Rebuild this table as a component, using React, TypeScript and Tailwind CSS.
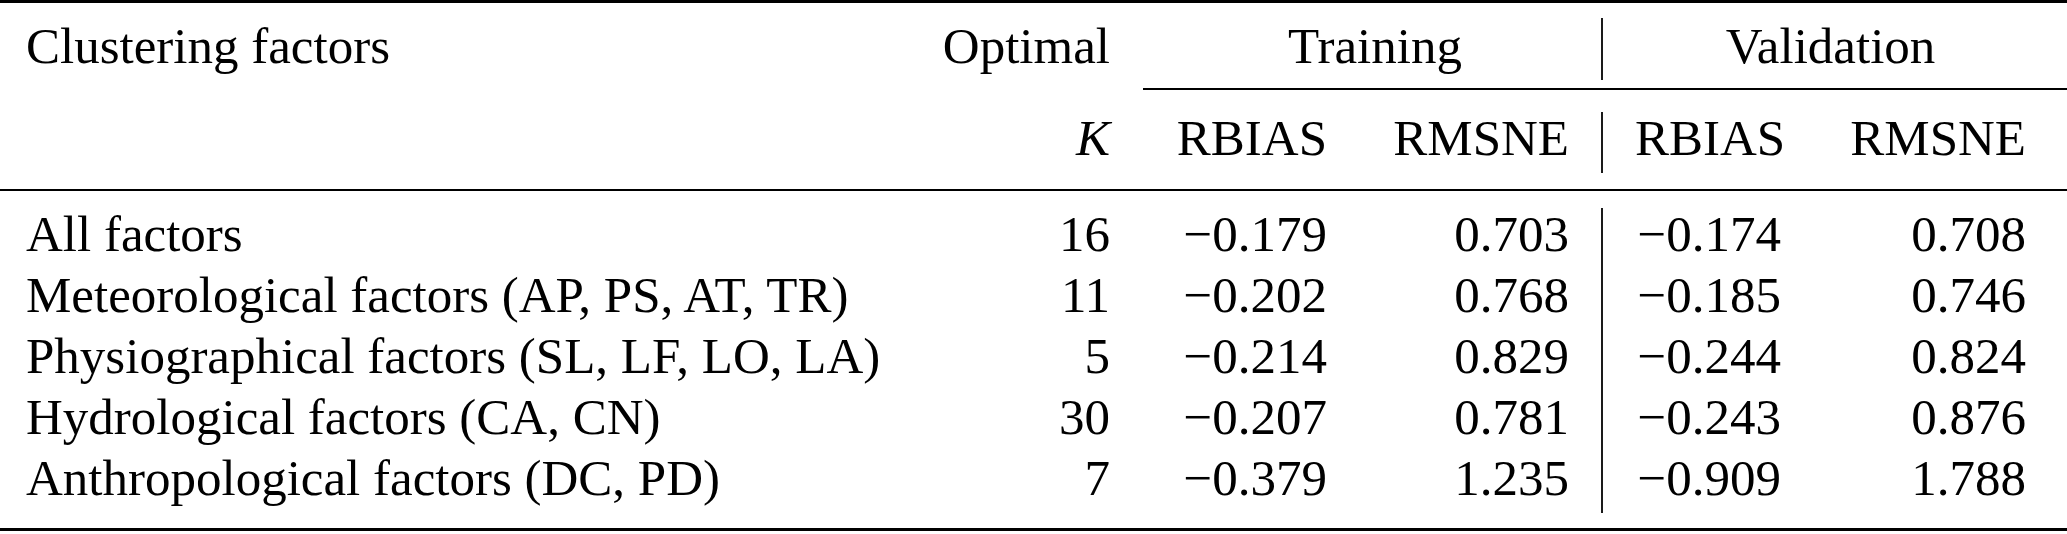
import React from 'react';

type Row = {
  name: string;
  k: string;
  tBias: string;
  tRmsne: string;
  vBias: string;
  vRmsne: string;
};

const rows: Row[] = [
  { name: 'All factors', k: '16', tBias: '−0.179', tRmsne: '0.703', vBias: '−0.174', vRmsne: '0.708' },
  { name: 'Meteorological factors (AP, PS, AT, TR)', k: '11', tBias: '−0.202', tRmsne: '0.768', vBias: '−0.185', vRmsne: '0.746' },
  { name: 'Physiographical factors (SL, LF, LO, LA)', k: '5', tBias: '−0.214', tRmsne: '0.829', vBias: '−0.244', vRmsne: '0.824' },
  { name: 'Hydrological factors (CA, CN)', k: '30', tBias: '−0.207', tRmsne: '0.781', vBias: '−0.243', vRmsne: '0.876' },
  { name: 'Anthropological factors (DC, PD)', k: '7', tBias: '−0.379', tRmsne: '1.235', vBias: '−0.909', vRmsne: '1.788' },
];

// column widths (px): name 900 | K 210 | train RBIAS 217 | train RMSNE 242 | bar 66 | val RBIAS 146 | val RMSNE 245
const Divider = ({ top, bottom }: { top: string; bottom: string }) => (
  <div className="w-[66px] flex justify-center">
    <div className={`w-[2px] bg-[#1a1a1a] ${top} ${bottom}`} />
  </div>
);

const BodyColumn = ({
  width,
  align,
  values,
  extra = '',
}: {
  width: string;
  align: string;
  values: string[];
  extra?: string;
}) => (
  <div className={`${width} ${align} ${extra} pt-[13px] flex flex-col`}>
    {values.map((v, i) => (
      <div key={i} className="leading-[61px] h-[61px] whitespace-nowrap">
        {v}
      </div>
    ))}
  </div>
);

export default function App() {
  return (
    <div className="w-[2067px] h-[534px] bg-white text-black text-[51px] font-['Liberation_Serif',serif]">
      {/* toprule */}
      <div className="h-[3px] bg-black" />

      {/* header row 1 */}
      <div className="h-[85px] flex">
        <div className="w-[900px] pl-[26px] pt-[13px] leading-[61px] whitespace-nowrap">Clustering factors</div>
        <div className="w-[210px] pt-[13px] leading-[61px] text-right">Optimal</div>
        <div className="w-[459px] pl-[71px] pt-[13px] leading-[61px] text-center">Training</div>
        <Divider top="mt-[15px]" bottom="mb-[8px]" />
        <div className="w-[391px] pt-[13px] leading-[61px] text-center">Validation</div>
      </div>

      {/* cmidrule */}
      <div className="h-[2px] ml-[1143px] bg-black" />

      {/* header row 2 */}
      <div className="h-[99px] flex">
        <div className="w-[900px]" />
        <div className="w-[210px] pt-[18px] leading-[61px] text-right">
          <i>K</i>
        </div>
        <div className="w-[217px] pt-[18px] leading-[61px] text-right">RBIAS</div>
        <div className="w-[242px] pt-[18px] leading-[61px] text-right">RMSNE</div>
        <Divider top="mt-[22px]" bottom="mb-[16px]" />
        <div className="w-[146px] pt-[18px] leading-[61px] text-right">RBIAS</div>
        <div className="w-[245px] pt-[18px] leading-[61px] text-right">RMSNE</div>
      </div>

      {/* midrule */}
      <div className="h-[2px] bg-black" />

      {/* body */}
      <div className="h-[337px] flex">
        <BodyColumn width="w-[900px]" align="text-left" extra="pl-[26px]" values={rows.map((r) => r.name)} />
        <BodyColumn width="w-[210px]" align="text-right" values={rows.map((r) => r.k)} />
        <BodyColumn width="w-[217px]" align="text-right" values={rows.map((r) => r.tBias)} />
        <BodyColumn width="w-[242px]" align="text-right" values={rows.map((r) => r.tRmsne)} />
        <Divider top="mt-[17px]" bottom="mb-[15px]" />
        <BodyColumn width="w-[146px]" align="text-right" values={rows.map((r) => r.vBias)} />
        <BodyColumn width="w-[245px]" align="text-right" values={rows.map((r) => r.vRmsne)} />
      </div>

      {/* bottomrule */}
      <div className="h-[3px] bg-black" />
    </div>
  );
}
